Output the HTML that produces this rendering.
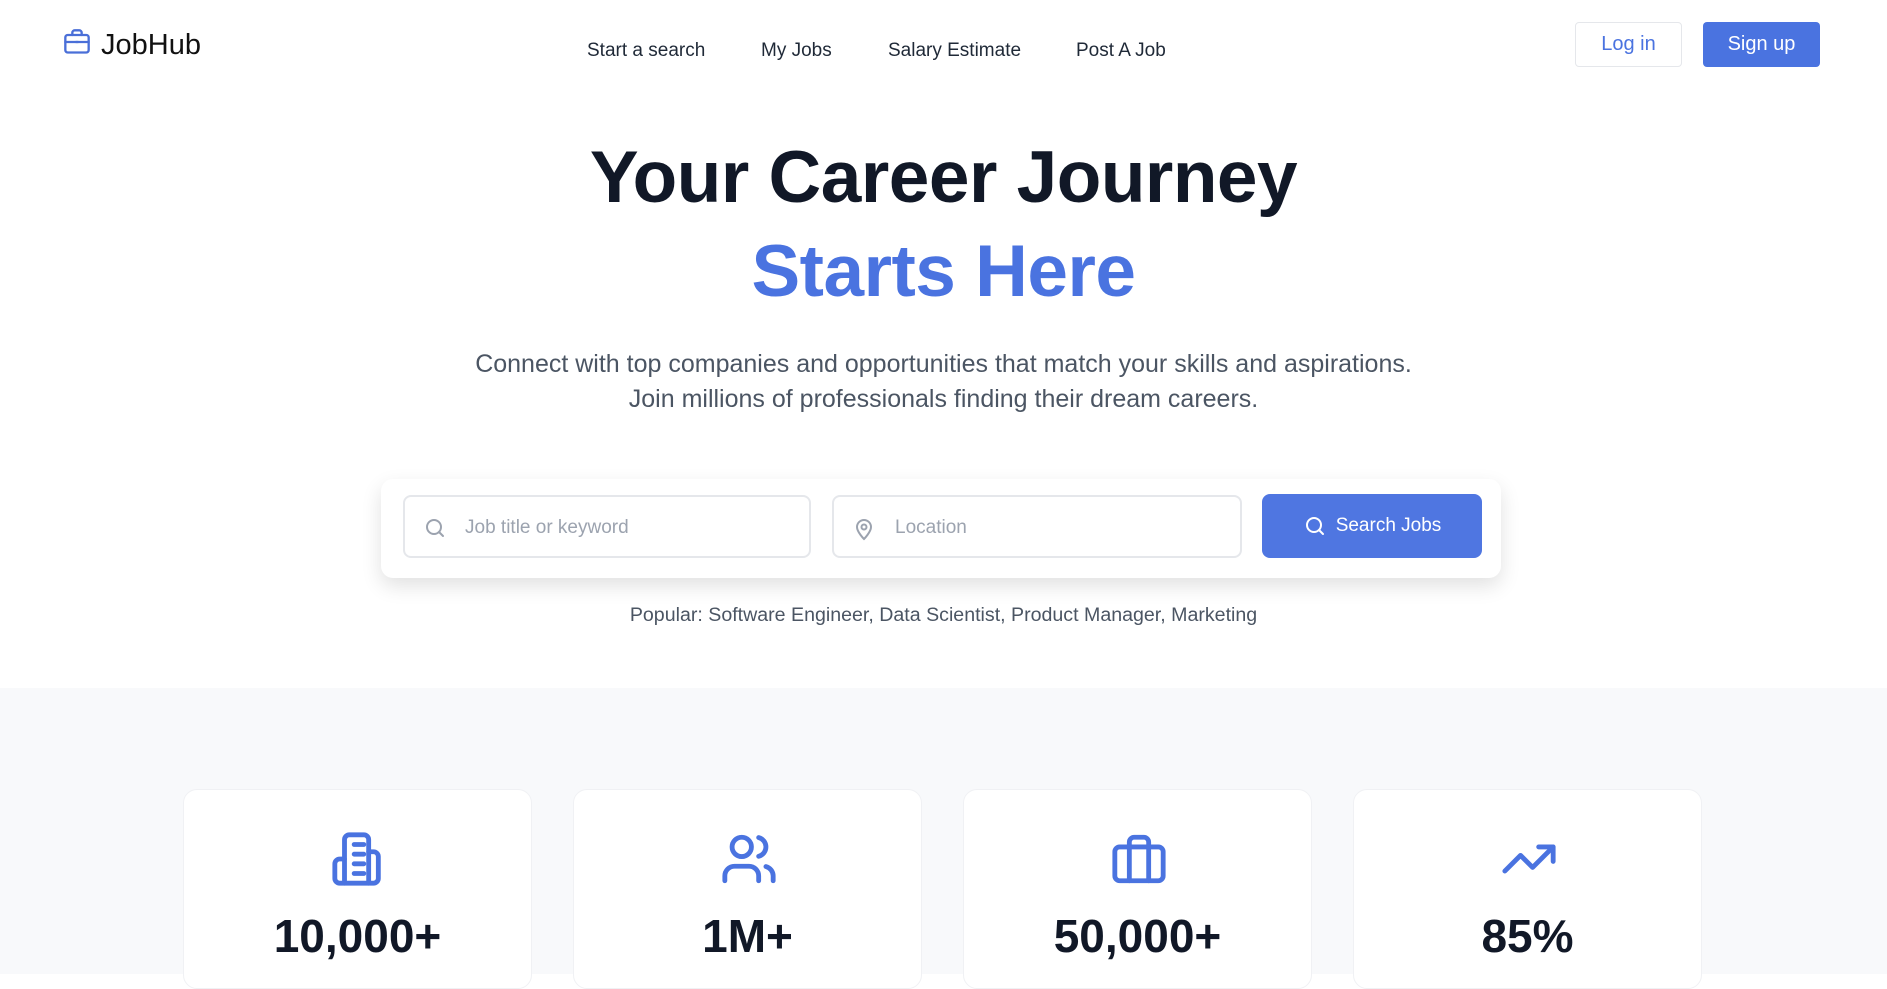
<!DOCTYPE html>
<html><head><meta charset="utf-8"><style>
*{box-sizing:border-box;margin:0;padding:0}
body{width:1887px;height:974px;overflow:hidden;background:#fff;font-family:"Liberation Sans",sans-serif;color:#111827;position:relative}
.a{position:absolute}
.nav a{position:absolute;top:40px;font-size:19px;color:#1f2937;text-decoration:none}
.btn{position:absolute;border-radius:4px;font-size:20px;display:flex;align-items:center;justify-content:center}
h1{position:absolute;left:0;width:1887px;text-align:center;font-size:73px;font-weight:bold;letter-spacing:-0.5px}
.input{position:absolute;top:495px;height:63px;border:2px solid #e5e7eb;border-radius:8px;background:#fff}
.input span{position:absolute;left:60px;top:20px;font-size:19px;color:#9ca3af}
.input svg{position:absolute;left:18px;top:19px}
.card{position:absolute;top:789px;width:349px;height:200px;background:#fff;border-radius:14px;border:1px solid #f0f1f4}
.card svg{position:absolute;left:146px;top:40px}
.card div{position:absolute;top:119px;width:100%;text-align:center;font-size:46px;font-weight:bold;color:#111827}
</style></head><body>
<svg class="a" style="left:63px;top:28px" width="28" height="28" viewBox="0 0 24 24" fill="none" stroke="#4a6fd8" stroke-width="2" stroke-linecap="round" stroke-linejoin="round"><path d="M8 6V4a2 2 0 0 1 2-2h4a2 2 0 0 1 2 2v2"/><rect x="2" y="6" width="20" height="15" rx="2"/><path d="M2 12h20"/><path d="M11 12h2"/></svg>
<div class="a" style="left:101px;top:29px;font-size:29px;color:#111">JobHub</div>
<div class="nav"><a style="left:587px">Start a search</a><a style="left:761px">My Jobs</a><a style="left:888px">Salary Estimate</a><a style="left:1076px">Post A Job</a></div>
<div class="btn" style="left:1575px;top:22px;width:107px;height:45px;border:1px solid #e5e7eb;color:#4a73e0">Log in</div>
<div class="btn" style="left:1703px;top:22px;width:117px;height:45px;background:#4a73e0;color:#fff">Sign up</div>
<h1 style="top:136px;color:#111827">Your Career Journey</h1>
<h1 style="top:230px;color:#4a73e0">Starts Here</h1>
<div class="a" style="left:0;width:1887px;top:347px;text-align:center;font-size:25px;line-height:35px;color:#4b5563">Connect with top companies and opportunities that match your skills and aspirations.<br>Join millions of professionals finding their dream careers.</div>
<div class="a" style="left:381px;top:479px;width:1120px;height:99px;background:#fff;border-radius:12px;box-shadow:0 8px 20px rgba(0,0,0,0.12)"></div>
<div class="input" style="left:403px;width:408px"><svg width="24" height="24" viewBox="0 0 24 24" fill="none" stroke="#9ca3af" stroke-width="2" stroke-linecap="round"><circle cx="11" cy="11" r="7"/><path d="M20 20l-4-4"/></svg><span>Job title or keyword</span></div>
<div class="input" style="left:832px;width:410px"><svg width="24" height="26" viewBox="0 0 24 24" fill="none" stroke="#9ca3af" stroke-width="2"><path d="M12 22s7-7 7-12a7 7 0 0 0-14 0c0 5 7 12 7 12z"/><circle cx="12" cy="10" r="2.5"/></svg><span style="left:61px">Location</span></div>
<div class="btn" style="left:1262px;top:494px;width:220px;height:64px;background:#4f76e1;color:#fff;border-radius:8px;font-size:19px"><svg width="24" height="24" viewBox="0 0 24 24" fill="none" stroke="#fff" stroke-width="2" stroke-linecap="round" style="margin-right:9px"><circle cx="11" cy="11" r="7"/><path d="M20 20l-4-4"/></svg>Search Jobs</div>
<div class="a" style="left:0;width:1887px;top:604px;text-align:center;font-size:19.6px;color:#4b5563">Popular: Software Engineer, Data Scientist, Product Manager, Marketing</div>
<div class="a" style="left:0;top:688px;width:1887px;height:286px;background:#f8f9fb"></div>
<div class="card" style="left:183px"><svg width="58" height="58" viewBox="0 0 24 24" fill="none" stroke="#4a73e0" stroke-width="2" stroke-linecap="round" stroke-linejoin="round"><path d="M6 22V4a2 2 0 0 1 2-2h6a2 2 0 0 1 2 2v18z"/><path d="M6 12H4a2 2 0 0 0-2 2v6a2 2 0 0 0 2 2h2"/><path d="M16 9h2a2 2 0 0 1 2 2v9a2 2 0 0 1-2 2h-2"/><path d="M10 6h4M10 10h4M10 14h4M10 18h4"/></svg><div>10,000+</div></div>
<div class="card" style="left:573px"><svg width="58" height="58" viewBox="0 0 24 24" fill="none" stroke="#4a73e0" stroke-width="2" stroke-linecap="round" stroke-linejoin="round"><path d="M16 21v-2a4 4 0 0 0-4-4H6a4 4 0 0 0-4 4v2"/><circle cx="9" cy="7" r="4"/><path d="M22 21v-2a4 4 0 0 0-3-3.87"/><path d="M16 3.13a4 4 0 0 1 0 7.75"/></svg><div>1M+</div></div>
<div class="card" style="left:963px"><svg width="58" height="58" viewBox="0 0 24 24" fill="none" stroke="#4a73e0" stroke-width="2" stroke-linecap="round" stroke-linejoin="round"><rect x="2" y="7" width="20" height="14" rx="2"/><path d="M16 21V5a2 2 0 0 0-2-2h-4a2 2 0 0 0-2 2v16"/></svg><div>50,000+</div></div>
<div class="card" style="left:1353px"><svg width="58" height="58" viewBox="0 0 24 24" fill="none" stroke="#4a73e0" stroke-width="2" stroke-linecap="round" stroke-linejoin="round"><path d="M22 7l-8.5 8.5-5-5L2 17"/><path d="M16 7h6v6"/></svg><div>85%</div></div>
</body></html>
